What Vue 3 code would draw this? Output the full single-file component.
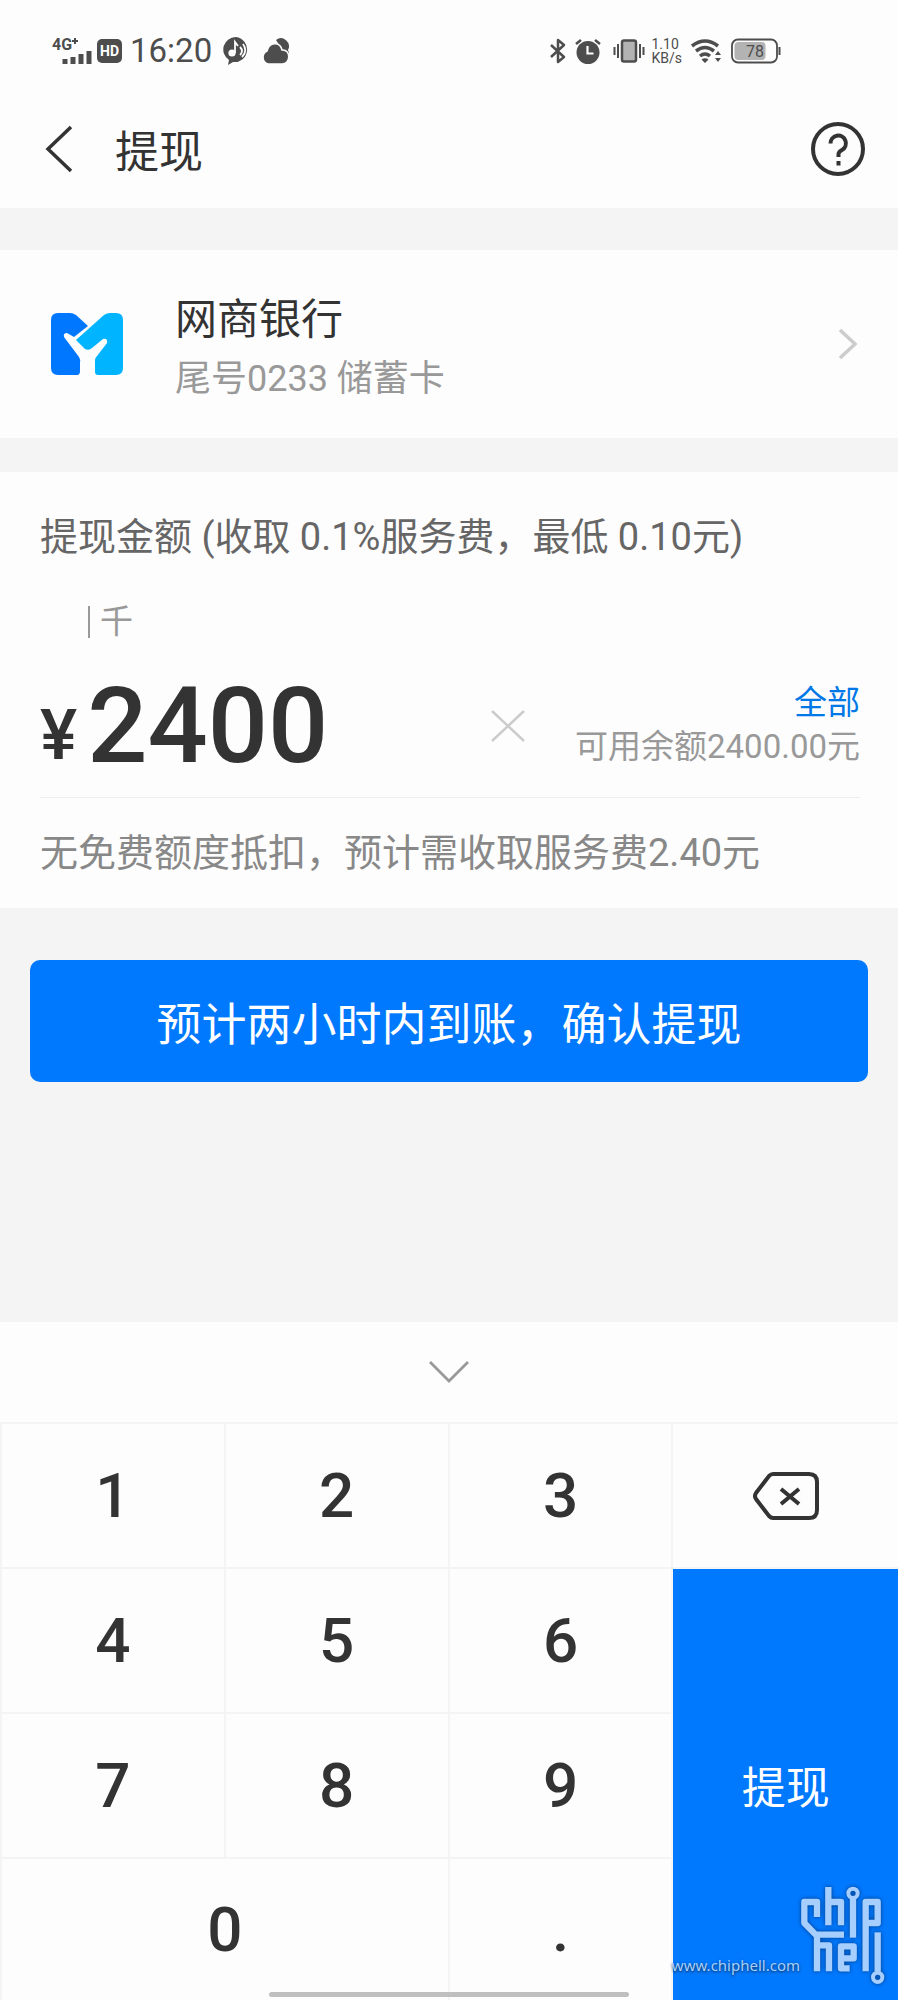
<script setup>
import { ref } from 'vue'

const amount = ref('2400')
const rows = ['1', '2', '3', 'del', '4', '5', '6', 'ok', '7', '8', '9', '0', '.']

function press(key) {
  if (key === 'del') amount.value = amount.value.slice(0, -1)
  else if (key !== 'ok') amount.value += key
}
</script>

<template>
  <div class="page">
    <div class="status">
      <div class="status-side">
        <svg class="signal" width="42" height="32" viewBox="0 0 42 32">
          <text x="0" y="15" class="net">4G</text>
          <path d="M20 6h6M23 3v6" stroke="#4d4d4d" stroke-width="2" />
          <path d="M13 24v5M21 22v7M29 19v10M37 16v13" stroke="#4d4d4d" stroke-width="5" stroke-linecap="butt" />
        </svg>
        <span class="hd">HD</span>
        <span class="clock">16:20</span>
        <svg class="note" width="26" height="28" viewBox="0 0 26 28">
          <path d="M13 0a12.500 12.500 0 1 1-3 25l-5 3 1-5A12.500 12.500 0 0 1 13 0z" fill="#4d4d4d" />
          <circle cx="9" cy="16" r="3.600" fill="#fff" />
          <path d="M12 16V5l3 4M17 10q4 4 0 8M20 7q5 7-1 13" fill="none" stroke="#fff" stroke-width="1.800" />
        </svg>
        <svg class="cloud" width="29" height="28" viewBox="0 0 29 28">
          <path d="M15 3a8 8 0 0 1 12 10l1 3a7 7 0 0 1-2 4z" fill="#4d4d4d" />
          <path d="M7 27a7 7 0 0 1-1-13C8 5 19 4 21 13c9-1 9 14 0 14z" fill="#4d4d4d" stroke="#fdfdfd" stroke-width="1.500" />
        </svg>
      </div>
      <div class="status-side">
        <svg width="16" height="26" viewBox="0 0 16 26">
          <path d="M1 7l13 12-6 5V2l6 5L1 19" fill="none" stroke="#4d4d4d" stroke-width="2.500" stroke-linejoin="round" />
        </svg>
        <svg class="alarm" width="26" height="26" viewBox="0 0 26 26">
          <circle cx="13" cy="14.500" r="11.500" fill="#4d4d4d" />
          <path d="M1 6l5-4M25 6l-5-4" stroke="#4d4d4d" stroke-width="2.500" />
          <path d="M12.500 8v7.500h6" fill="none" stroke="#fff" stroke-width="2.200" />
        </svg>
        <svg class="vibrate" width="32" height="24" viewBox="0 0 32 24">
          <rect x="9" y="1.500" width="14" height="21" rx="2" fill="#b3b3b3" stroke="#4d4d4d" stroke-width="2.500" />
          <path d="M5 5v14M27 5v14M1.500 8v8M30.500 8v8" stroke="#4d4d4d" stroke-width="2" />
        </svg>
        <span class="speed"><span>1.10</span><span>KB/s</span></span>
        <svg class="wifi" width="32" height="26" viewBox="0 0 32 26">
          <path d="M2 8q13-10 26 0M6 13q9-7 18 0M10 18q5-4 10 0" fill="none" stroke="#4d4d4d" stroke-width="3.500" />
          <path d="M11.500 21.500q3.500-2.500 7 0l-3.500 3.500zM25 17l3-4 3 4zM25 20l3 4 3-4z" fill="#4d4d4d" />
        </svg>
        <svg class="battery" width="50" height="26" viewBox="0 0 50 26">
          <rect x="1" y="1.500" width="45" height="23" rx="6" fill="none" stroke="#4d4d4d" stroke-width="1.800" />
          <rect x="3.500" y="4" width="31" height="18" rx="4" fill="#b3b3b3" />
          <path d="M48.500 9v8" stroke="#4d4d4d" stroke-width="2" />
          <text x="15" y="19" class="charge">78</text>
        </svg>
      </div>
    </div>

    <header class="header">
      <button class="icon-button back" aria-label="返回">
        <svg width="30" height="48" viewBox="0 0 30 48">
          <path d="M27 2L4 24l23 22" fill="none" stroke="#333" stroke-width="3.500" />
        </svg>
      </button>
      <h1>提现</h1>
      <button class="icon-button" aria-label="帮助">
        <svg width="56" height="56" viewBox="0 0 56 56">
          <circle cx="28" cy="28" r="25" fill="none" stroke="#333" stroke-width="4" />
          <path d="M20.500 22.500a7.700 7.700 0 1 1 11.500 6.500q-3.500 2-3.500 4V36" fill="none" stroke="#333" stroke-width="4" />
          <path d="M28.500 40v4.500" stroke="#333" stroke-width="4" />
        </svg>
      </button>
    </header>

    <button class="bank">
      <svg width="72" height="63" viewBox="0 0 72 63">
        <path d="M7 0h12q3 0 6 2l12 11-14 11-7-4q-4 0-3 4l15 20q2 3 1 6v8q0 4-3 4H7q-7 0-7-7V7q0-7 7-7z" fill="#0077ff" />
        <path d="M53 2q3-2 6-2h6q7 0 7 7v48q0 7-7 7H47q-3 0-3-3V47q0-2 2-4l10-13q1-5-4-4L41 35q-3 3-7 1l-9-9z" fill="#00b4ff" />
      </svg>
      <span class="bank-text">
        <span class="bank-name">网商银行</span>
        <span class="bank-card">尾号0233 储蓄卡</span>
      </span>
      <svg width="20" height="32" viewBox="0 0 20 32">
        <path d="M2 2l15 14L2 30" fill="none" stroke="#ccc" stroke-width="3.500" />
      </svg>
    </button>

    <section class="amount">
      <label class="amount-label" for="amount">提现金额 (收取 0.1%服务费，最低 0.10元)</label>
      <div class="unit">千</div>
      <div class="amount-row">
        <span class="yen">¥</span>
        <input id="amount" v-model="amount" class="amount-input" type="text" inputmode="decimal" />
        <button class="icon-button clear" aria-label="清除" @click="amount = ''">
          <svg width="34" height="32" viewBox="0 0 34 32">
            <path d="M1 1l32 30M33 1L1 31" stroke="#ccc" stroke-width="2.500" />
          </svg>
        </button>
        <div class="balance">
          <button class="all">全部</button>
          <span>可用余额2400.00元</span>
        </div>
      </div>
      <p class="fee">无免费额度抵扣，预计需收取服务费2.40元</p>
    </section>

    <div class="action">
      <button class="confirm">预计两小时内到账，确认提现</button>
    </div>

    <section class="keyboard">
      <button class="collapse" aria-label="收起键盘">
        <svg width="40" height="24" viewBox="0 0 40 24">
          <path d="M1 2l19 19L39 2" fill="none" stroke="#999" stroke-width="2.800" />
        </svg>
      </button>
      <div class="keys">
        <button
          v-for="key in rows"
          :key="key"
          class="key"
          :class="{ ok: key === 'ok', zero: key === '0' }"
          :aria-label="key === 'del' ? '删除' : null"
          @click="press(key)"
        >
          <svg v-if="key === 'del'" width="66" height="48" viewBox="0 0 66 48">
            <path d="M20 2h36q8 0 8 8v28q0 8-8 8H20q-2 0-4-2L3 27q-2-3 0-6L16 4q2-2 4-2z" fill="none" stroke="#333" stroke-width="4" />
            <path d="M28 17l18 15M46 17L28 32" stroke="#333" stroke-width="4" />
          </svg>
          <template v-else-if="key === 'ok'">提现</template>
          <template v-else>{{ key }}</template>
        </button>
      </div>
      <div class="home-bar"></div>
      <div class="watermark">
        <span>www.chiphell.com</span>
        <svg width="87" height="105" viewBox="479 70 261 315" role="img" aria-label="chip hell">
          <g fill="none" stroke="#a6cfff" stroke-width="19" stroke-linejoin="round">
            <path d="M530 172V127H492V190L526 225H611M530 225V335M530 257H566V335" />
            <path d="M564 82V197M564 127H602V197" />
            <path d="M638 116V234" />
            <path d="M676 335V127H712V190H676" />
            <path d="M712 218V336" />
            <path d="M628 326H602V260H640V296H604" />
            <circle cx="638" cy="101" r="14" stroke-width="12" />
            <circle cx="712" cy="353" r="14" stroke-width="12" />
          </g>
        </svg>
      </div>
    </section>
  </div>
</template>

<style>
body {
  margin: 0;
}
</style>

<style scoped>
.page {
  display: flex;
  flex-direction: column;
  min-height: 100vh;
  background: #f4f4f4;
  color: #333;
  font-family: Roboto, "Noto Sans CJK SC", sans-serif;
}

button {
  margin: 0;
  padding: 0;
  border: 0;
  background: none;
  color: inherit;
  font: inherit;
  cursor: pointer;
}

svg {
  display: block;
  flex: none;
}

.status {
  display: flex;
  align-items: center;
  justify-content: space-between;
  height: 102px;
  padding: 0 117px 0 52px;
  box-sizing: border-box;
  background: #fdfdfd;
  color: #4d4d4d;
}

.status-side {
  display: flex;
  align-items: center;
}

.net {
  font-size: 16px;
  font-weight: 700;
  fill: #4d4d4d;
}

.hd {
  width: 25px;
  margin-left: 3px;
  border-radius: 5px;
  background: #4d4d4d;
  color: #fff;
  font-size: 14px;
  font-weight: 700;
  line-height: 24px;
  text-align: center;
}

.clock {
  margin: 0 11px 0 8px;
  font-size: 33px;
  line-height: 40px;
}

.cloud {
  margin-left: 12px;
}

.alarm {
  margin-left: 9px;
}

.vibrate {
  margin-left: 12px;
}

.speed {
  display: flex;
  flex-direction: column;
  margin: 0 8px 0 6px;
  font-size: 14px;
  line-height: 14px;
}

.battery {
  margin-left: 9px;
}

.charge {
  font-size: 16px;
  fill: #4d4d4d;
}

.header {
  display: flex;
  align-items: center;
  height: 106px;
  padding: 0 32px 12px 44px;
  box-sizing: border-box;
  background: #fdfdfd;
}

h1 {
  flex: 1;
  margin: 0 0 0 41px;
  padding-top: 8px;
  font-size: 44px;
  font-weight: 400;
  line-height: 60px;
}

.bank {
  display: flex;
  align-items: center;
  height: 188px;
  margin: 42px 0 34px;
  padding: 0 40px 0 51px;
  background: #fdfdfd;
  text-align: left;
}

.bank-text {
  display: flex;
  flex: 1;
  flex-direction: column;
  margin-left: 52px;
  padding-top: 8px;
}

.bank-name {
  font-size: 42px;
  line-height: 62px;
}

.bank-card {
  color: #999;
  font-size: 36px;
  line-height: 56px;
}

.amount {
  padding: 37px 38px 27px 40px;
  background: #fdfdfd;
}

.amount-label {
  display: block;
  color: #666;
  font-size: 38px;
  line-height: 56px;
}

.unit {
  width: fit-content;
  margin: 41px 0 0 48px;
  padding-left: 10px;
  border-left: 2px solid #999;
  color: #999;
  font-size: 33px;
  line-height: 32px;
}

.amount-row {
  display: flex;
  align-items: center;
  height: 159px;
  border-bottom: 1px solid #eee;
}

.yen {
  margin-top: 34px;
  font-size: 70px;
  font-weight: 500;
  line-height: 80px;
}

.amount-input {
  flex: 1;
  min-width: 0;
  height: 120px;
  margin: 16px 0 0 10px;
  padding: 0;
  border: 0;
  outline: 0;
  background: none;
  color: #333;
  font-family: Roboto, sans-serif;
  font-size: 106px;
  font-weight: 500;
}

.clear {
  margin: 16px 50px 0 0;
}

.balance {
  display: flex;
  flex-direction: column;
  align-items: flex-end;
  margin-top: 14px;
  color: #999;
  font-size: 33px;
  line-height: 44px;
  white-space: nowrap;
}

.all {
  color: #0078e8;
}

.fee {
  margin: 27px 0 0;
  color: #888;
  font-size: 38px;
  line-height: 56px;
}

.action {
  flex: 1;
  padding: 52px 30px;
}

.confirm {
  width: 100%;
  height: 122px;
  border-radius: 10px;
  background: #0079ff;
  color: #fff;
  font-size: 45px;
}

.keyboard {
  position: relative;
  background: #fdfdfd;
}

.collapse {
  display: flex;
  align-items: center;
  justify-content: center;
  width: 100%;
  height: 100px;
}

.keys {
  display: grid;
  grid-template-columns: repeat(3, 83fr) 84fr;
  grid-template-rows: repeat(3, 143px) 141px;
  gap: 2px;
  padding: 2px 0 0 2px;
  background: #f4f4f4;
}

.key {
  display: flex;
  align-items: center;
  justify-content: center;
  background: #fdfdfd;
  font-size: 62px;
  font-weight: 500;
}

.zero {
  grid-column: span 2;
}

.ok {
  grid-row: span 3;
  background: #0079ff;
  color: #fff;
  font-size: 44px;
  font-weight: 400;
}

.home-bar {
  position: absolute;
  bottom: 3px;
  left: 30%;
  width: 40%;
  height: 5px;
  border-radius: 3px;
  background: #bfbfbf;
}

.watermark {
  position: absolute;
  right: 11px;
  bottom: 12px;
  display: flex;
  align-items: flex-end;
  color: #a6cfff;
  font-family: "Noto Sans", sans-serif;
  font-size: 15px;
  line-height: 46px;
  text-shadow: 0 1px 3px #123;
  pointer-events: none;
}

.watermark svg {
  filter: drop-shadow(0 0 2px #003a80);
}
</style>
